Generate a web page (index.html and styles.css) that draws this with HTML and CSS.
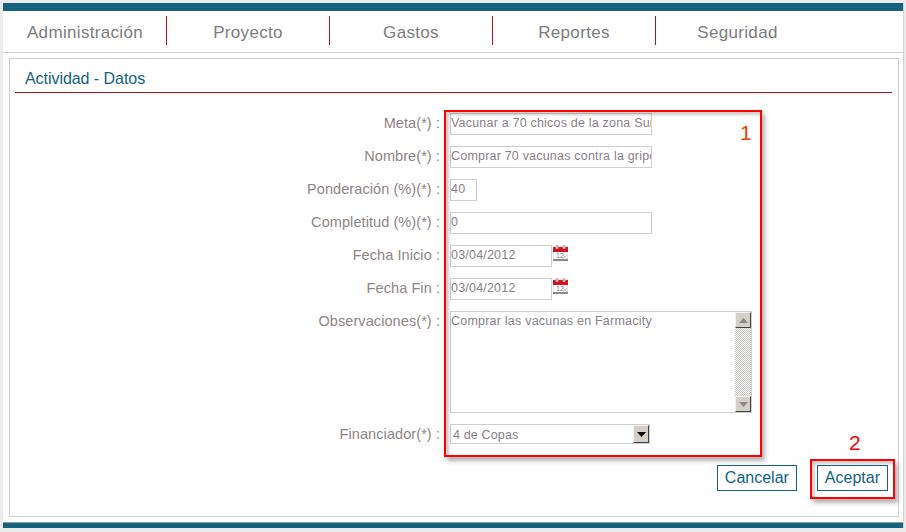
FILE: index.html
```html
<!DOCTYPE html>
<html lang="es">
<head>
<meta charset="utf-8">
<title>Actividad - Datos</title>
<link rel="stylesheet" href="styles.css">
</head>
<body>
<div class="page">
  <div class="topbar"></div>
  <nav class="nav">
    <a class="nav-item">Administración</a>
    <a class="nav-item">Proyecto</a>
    <a class="nav-item">Gastos</a>
    <a class="nav-item">Reportes</a>
    <a class="nav-item nav-last">Seguridad</a>
  </nav>
  <main class="panel">
    <h1 class="title">Actividad - Datos</h1>
    <form class="form">
      <label class="lbl">Meta(*) :</label>
      <div class="field"><div class="input wide">Vacunar a 70 chicos de la zona Sur</div></div>
      <label class="lbl">Nombre(*) :</label>
      <div class="field"><div class="input wide">Comprar 70 vacunas contra la gripe</div></div>
      <label class="lbl">Ponderación (%)(*) :</label>
      <div class="field"><div class="input small">40</div></div>
      <label class="lbl">Completitud (%)(*) :</label>
      <div class="field"><div class="input wide">0</div></div>
      <label class="lbl">Fecha Inicio :</label>
      <div class="field date">
        <div class="input med">03/04/2012</div>
        <svg class="cal" viewBox="0 0 15 16" width="15" height="16"><rect x="0" y="1" width="15" height="15" fill="#e4e4e4"/><rect x="1" y="6" width="13" height="8" fill="#fff"/><rect x="0" y="2" width="15" height="5" fill="#d8101c"/><rect x="2.500" y="0" width="3" height="4" rx="1" fill="#bbb"/><rect x="9.500" y="0" width="3" height="4" rx="1" fill="#bbb"/><rect x="0" y="14" width="15" height="2" fill="#8c8c8c"/><text x="3" y="12.500" class="cal-num">12</text><path d="M10 10l4 4M14 10l-4 4" stroke="#ccc" fill="none"/></svg>
      </div>
      <label class="lbl">Fecha Fin :</label>
      <div class="field date">
        <div class="input med">03/04/2012</div>
        <svg class="cal" viewBox="0 0 15 16" width="15" height="16"><rect x="0" y="1" width="15" height="15" fill="#e4e4e4"/><rect x="1" y="6" width="13" height="8" fill="#fff"/><rect x="0" y="2" width="15" height="5" fill="#d8101c"/><rect x="2.500" y="0" width="3" height="4" rx="1" fill="#bbb"/><rect x="9.500" y="0" width="3" height="4" rx="1" fill="#bbb"/><rect x="0" y="14" width="15" height="2" fill="#8c8c8c"/><text x="3" y="12.500" class="cal-num">12</text><path d="M10 10l4 4M14 10l-4 4" stroke="#ccc" fill="none"/></svg>
      </div>
      <label class="lbl">Observaciones(*) :</label>
      <div class="field">
        <div class="textarea">
          <div class="ta-text">Comprar las vacunas en Farmacity</div>
          <div class="scroll">
            <span class="sbtn"><svg width="9" height="5" viewBox="0 0 9 5"><path d="M4.500 0L9 5H0z" fill="#8a8a8a"/></svg></span>
            <span class="strack"></span>
            <span class="sbtn"><svg width="9" height="5" viewBox="0 0 9 5"><path d="M0 0H9L4.500 5z" fill="#8a8a8a"/></svg></span>
          </div>
        </div>
      </div>
      <label class="lbl">Financiador(*) :</label>
      <div class="field">
        <div class="select">
          <span class="sel-text">4 de Copas</span>
          <span class="sbtn sel-btn"><svg width="9" height="5" viewBox="0 0 9 5"><path d="M0 0H9L4.500 5z" fill="#000"/></svg></span>
        </div>
      </div>
    </form>
    <div class="actions">
      <button class="btn" type="button">Cancelar</button>
      <button class="btn" type="button">Aceptar</button>
    </div>
    <div class="mark mark-form"></div>
    <div class="mark mark-btn"></div>
    <span class="num num-1">1</span>
    <span class="num num-2">2</span>
  </main>
  <div class="bottombar"></div>
</div>
</body>
</html>
```
FILE: styles.css
```css
* { box-sizing: border-box; }
html, body { margin: 0; height: 100%; }
body {
  width: 906px;
  height: 532px;
  overflow: hidden;
  background: #ebebeb;
  padding: 3px 2px 0 3px;
  font-family: "Liberation Sans", Arial, sans-serif;
}
.page {
  position: relative;
  width: 901px;
  height: 525px;
  background: #fff;
  display: flex;
  flex-direction: column;
  border-right: 1px solid #d4d4d4;
}
.topbar { height: 8px; background: #136280; flex: none; }
.nav {
  display: flex;
  padding: 5px 0 7px 1px;
  border-bottom: 1px solid #cfcfcf;
  flex: none;
  box-sizing: content-box;
  height: 29px;
}
.nav-item {
  width: 163px;
  text-align: center;
  font-size: 17px;
  line-height: 33px;
  letter-spacing: 0.33px;
  color: #7c7c7c;
  border-right: 1px solid #b5121b;
}
.nav-last { border-right: 0; }
.panel {
  position: relative;
  margin: 5px 4px 0 6px;
  height: 459px;
  border: 1px solid #cfcfcf;
  padding: 0 6px 0 5px;
  flex: none;
}
.title {
  margin: 0;
  height: 34px;
  padding-left: 10px;
  border-bottom: 1px solid #b5121b;
  font-size: 16px;
  font-weight: 400;
  line-height: 39px;
  letter-spacing: -0.05px;
  color: #136280;
}
.form {
  display: grid;
  grid-template-columns: 425px 1fr;
  grid-template-rows: repeat(6, 33px) 113px 24px;
  column-gap: 10px;
  padding-top: 20px;
}
.lbl {
  padding-top: 1px;
  text-align: right;
  font-size: 14.5px;
  line-height: 19px;
  letter-spacing: 0.08px;
  color: #8f8585;
}
.field { display: flex; align-items: flex-start; }
.date { gap: 1px; }
.input {
  height: 22px;
  border: 1px solid #cfcfcf;
  background: #fff;
  color: #8a7f8a;
  font-size: 12.5px;
  letter-spacing: 0.2px;
  line-height: 19px;
  white-space: nowrap;
  overflow: hidden;
}
.wide { width: 202px; }
.small { width: 27px; }
.med { width: 102px; }
.cal { flex: none; }
.cal-num { font-size: 7px; fill: #777; font-family: "Liberation Sans", Arial, sans-serif; }
.textarea {
  width: 302px;
  height: 102px;
  border: 1px solid #cfcfcf;
  display: flex;
  justify-content: space-between;
}
.ta-text {
  padding-top: 1px;
  font-size: 12.5px;
  letter-spacing: 0.22px;
  line-height: 16px;
  color: #8a7f8a;
}
.scroll { width: 16px; display: flex; flex-direction: column; }
.sbtn {
  width: 16px;
  height: 16px;
  flex: none;
  display: flex;
  align-items: center;
  justify-content: center;
  background: #d4d0c8;
  border-style: solid;
  border-width: 1px;
  border-color: #f4f2ee #404040 #404040 #f4f2ee;
}
.strack {
  flex: 1;
  background-color: #fff;
  background-image: repeating-conic-gradient(#c4c2bc 0 25%, #fff 0 50%);
  background-size: 2px 2px;
}
.select {
  width: 200px;
  height: 20px;
  border: 1px solid #cfcfcf;
  display: flex;
  justify-content: space-between;
  align-items: center;
}
.sel-text {
  padding: 1px 0 0 2px;
  font-size: 12.5px;
  letter-spacing: 0.15px;
  color: #8a7f8a;
}
.sel-btn { height: 18px; }
.actions {
  display: flex;
  justify-content: flex-end;
  gap: 20px;
  padding-right: 4px;
  margin-top: 17px;
}
.btn {
  height: 26px;
  padding: 0 7px;
  margin: 0;
  border: 1px solid #136280;
  background: #fff;
  color: #136280;
  font: 16px/24px "Liberation Sans", Arial, sans-serif;
}
.mark {
  position: absolute;
  border: 2px solid #f00;
  box-shadow: 3px 4px 4px rgba(90, 90, 90, 0.45), inset 3px 3px 3px rgba(90, 90, 90, 0.3);
  pointer-events: none;
}
.mark-form { left: 434px; top: 51px; width: 318px; height: 347px; }
.mark-btn { left: 800px; top: 400px; width: 85px; height: 40px; }
.num {
  position: absolute;
  color: #f00;
  font-size: 21px;
  line-height: 22px;
}
.num-1 { left: 730px; top: 63px; color: #f04000; }
.num-2 { left: 839px; top: 373px; }
.bottombar { height: 6px; margin-top: 5px; background: #136280; flex: none; border-top: 1px solid #999; }
```
